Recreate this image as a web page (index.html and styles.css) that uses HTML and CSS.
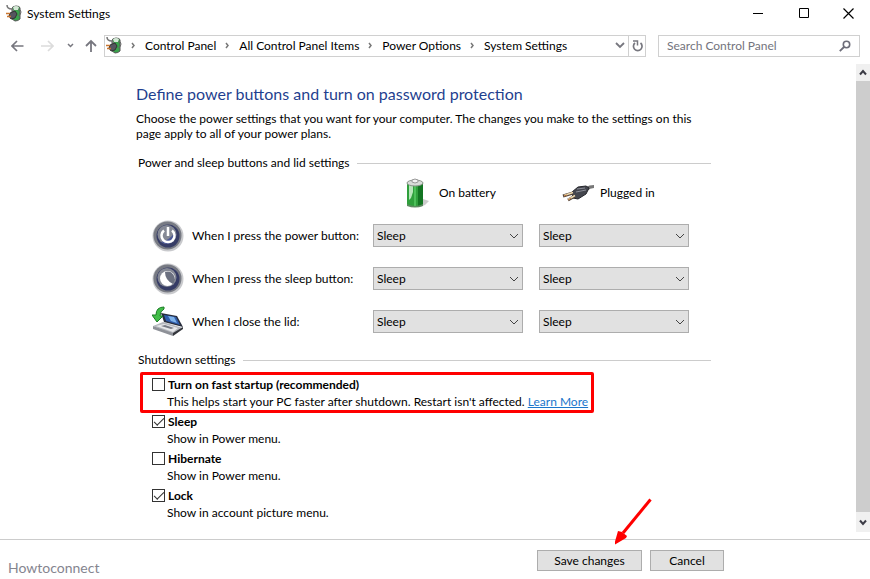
FILE: index.html
```html
<!DOCTYPE html>
<html lang="en">
<head>
  <meta charset="utf-8">
  <meta name="viewport" content="width=device-width, initial-scale=1.0">
  <title>System Settings</title>
  <link rel="stylesheet" href="styles.css">
</head>
<body>
  <!-- shared icons -->
  <svg class="defs" width="0" height="0" aria-hidden="true">
    <symbol id="app" viewBox="0 0 16 17">
      <path d="M6 4q0-3 4-3t4 2v11q-2 2-5 2l-3-2z" fill="#3aa34c" stroke="#555" />
      <path d="M7 2q3-2 6 0l-1 3H8z" fill="#d4e8d6" />
      <path d="M1 0q0 4 5 4l2 3" fill="none" stroke="#777" stroke-width="1.500" />
      <path d="M4 8l5-2 2 3-2 4-4 1-2-3z" fill="#55555f" stroke="#333" />
      <path d="M0 8.500h4M1 11.500h4" stroke="#c9762f" stroke-width="1.500" />
      <path d="M12 5q3-1 3 2t-3 4" fill="none" stroke="#666" />
    </symbol>
    <symbol id="chevron" viewBox="0 0 10 6">
      <path d="M1 1l4 4 4-4" fill="none" stroke="currentColor" />
    </symbol>
    <symbol id="sep" viewBox="0 0 5 7">
      <path d="M1 1l2 2.500-2 2.500" fill="none" stroke="#777" stroke-width="1.500" />
    </symbol>
  </svg>

  <div class="window">
    <header class="titlebar">
      <svg class="app-icon" width="16" height="17"><use href="#app" /></svg>
      <span class="title">System Settings</span>
      <button class="win-btn" aria-label="Minimize"><svg width="11" height="11"><path d="M0 5.500h10" stroke="#000" /></svg></button>
      <button class="win-btn" aria-label="Maximize"><svg width="11" height="11"><path d="M.5.5h9v9h-9z" fill="none" stroke="#000" /></svg></button>
      <button class="win-btn" aria-label="Close"><svg width="11" height="11"><path d="M.5.5l10 10M10.500.5l-10 10" stroke="#000" stroke-width="1.200" /></svg></button>
    </header>

    <nav class="navbar">
      <button class="nav-btn" aria-label="Back"><svg width="13" height="12" viewBox="0 0 13 12"><path d="M12.500 6H1.500M6 1L1 6l5 5" fill="none" stroke="#77777f" stroke-width="1.700" /></svg></button>
      <button class="nav-btn forward" aria-label="Forward"><svg width="13" height="12" viewBox="0 0 13 12"><path d="M0 6h11M7 1l5 5-5 5" fill="none" stroke="#dcdcdc" stroke-width="1.700" /></svg></button>
      <button class="nav-btn recent" aria-label="Recent locations"><svg width="7" height="5" viewBox="0 0 7 5"><path d="M1 1l2.500 2.500L6 1" fill="none" stroke="#77777f" stroke-width="1.500" /></svg></button>
      <button class="nav-btn up" aria-label="Up"><svg width="12" height="13" viewBox="0 0 12 13"><path d="M6 13V2M1 7l5-5 5 5" fill="none" stroke="#77777f" stroke-width="1.800" /></svg></button>
      <div class="address">
        <svg class="app-icon" width="16" height="17"><use href="#app" /></svg>
        <svg class="sep" width="5" height="7"><use href="#sep" /></svg>
        <a href="#">Control Panel</a>
        <svg class="sep" width="5" height="7"><use href="#sep" /></svg>
        <a href="#">All Control Panel Items</a>
        <svg class="sep" width="5" height="7"><use href="#sep" /></svg>
        <a href="#">Power Options</a>
        <svg class="sep" width="5" height="7"><use href="#sep" /></svg>
        <a href="#">System Settings</a>
        <button class="history" aria-label="Previous locations"><svg width="10" height="7" viewBox="0 0 10 7"><path d="M1 1l4 4 4-4" fill="none" stroke="#77777f" stroke-width="1.800" /></svg></button>
        <button class="refresh" aria-label="Refresh"><svg width="11" height="12" viewBox="0 0 11 12"><path d="M8.500 3A4.300 4.300 0 1 1 3 3" fill="none" stroke="#77777f" stroke-width="1.700" /><path d="M1 1h4.500v4.500" fill="none" stroke="#77777f" stroke-width="1.500" /></svg></button>
      </div>
      <div class="search">
        <input type="text" placeholder="Search Control Panel" aria-label="Search Control Panel">
        <svg width="12" height="12" viewBox="0 0 12 12"><circle cx="7.500" cy="4.500" r="3.200" fill="none" stroke="#6c6c78" stroke-width="1.600" /><path d="M5 7L.8 11.200" stroke="#6c6c78" stroke-width="1.800" /></svg>
      </div>
    </nav>

    <div class="body">
      <main class="content">
        <h1>Define power buttons and turn on password protection</h1>
        <p class="intro">Choose the power settings that you want for your computer. The changes you make to the settings on this page apply to all of your power plans.</p>

        <h2>Power and sleep buttons and lid settings</h2>
        <div class="power">
          <div class="source battery">
            <svg width="24" height="30" viewBox="0 0 24 30">
              <path d="M17 21l6 2-4 4-5 2z" fill="#ccc" />
              <path d="M1 5q8-4 16 0v22q-8 4-16 0z" fill="#2fa03c" />
              <path d="M12 5h5v22l-5 1z" fill="#137522" />
              <path d="M3 6h4v8l-2 6-2 2z" fill="#b9e6bb" />
              <path d="M8 6h2v22H8z" fill="#4dc05a" />
              <ellipse cx="9" cy="5" rx="8" ry="3" fill="#d8dcd8" stroke="#8b948b" />
              <path d="M6 2q3-2 6 0v2q-3 2-6 0z" fill="#f2f2f2" stroke="#999" />
              <path d="M1 26q8 4 16 0v2q-8 3-16 0z" fill="#5d8a60" />
            </svg>
            <span>On battery</span>
          </div>
          <div class="source plugged">
            <svg width="32" height="18" viewBox="0 0 32 18">
              <path d="M24 3q3-2 8-2v3q-4 0-7 3z" fill="#777" />
              <path d="M10 8l6-5 8-1 3 2-3 6-8 5-5-1z" fill="#44464e" stroke="#25262c" />
              <path d="M15 5l8-1M14 8l10-2" stroke="#8c8e98" />
              <path d="M11 9l-10 3M13 12l-7 4" stroke="#51433a" stroke-width="3" />
              <path d="M11 8.500l-9 3M13 11.500l-7 4" stroke="#ecd9b0" stroke-width="1.500" />
              <path d="M5 11l-3 1M9 14l-3 2" stroke="#b57338" />
            </svg>
            <span>Plugged in</span>
          </div>

          <div class="action">
            <svg width="32" height="32" viewBox="0 0 32 32">
              <circle cx="16" cy="16" r="15.500" fill="#c9cacd" />
              <circle cx="15.500" cy="15.500" r="14" fill="#777a83" />
              <circle cx="16" cy="16" r="11.500" fill="#363c66" />
              <circle cx="15" cy="14.500" r="9.500" fill="#858995" />
              <path d="M9 22a9 9 0 0 0 14-10q-5 8-14 10z" fill="#4c5896" />
              <path d="M12 10.500a6.500 6.500 0 1 0 8 0M16 7v9" fill="none" stroke="#fff" stroke-width="2.500" />
            </svg>
            <span>When I press the power button:</span>
          </div>
          <div class="combo"><select aria-label="Power button, on battery"><option>Sleep</option></select><svg width="10" height="6"><use href="#chevron" /></svg></div>
          <div class="combo"><select aria-label="Power button, plugged in"><option>Sleep</option></select><svg width="10" height="6"><use href="#chevron" /></svg></div>

          <div class="action">
            <svg width="32" height="32" viewBox="0 0 32 32">
              <circle cx="16" cy="16" r="15.500" fill="#c9cacd" />
              <circle cx="15.500" cy="15.500" r="14" fill="#777a83" />
              <circle cx="16" cy="16" r="11.500" fill="#363c66" />
              <circle cx="15" cy="14.500" r="9.500" fill="#858995" />
              <circle cx="15.500" cy="15.500" r="7.500" fill="#fff" />
              <path d="M13 9a7.500 7.500 0 0 1 8 12q-8-4-8-12z" fill="#6b7080" />
            </svg>
            <span>When I press the sleep button:</span>
          </div>
          <div class="combo"><select aria-label="Sleep button, on battery"><option>Sleep</option></select><svg width="10" height="6"><use href="#chevron" /></svg></div>
          <div class="combo"><select aria-label="Sleep button, plugged in"><option>Sleep</option></select><svg width="10" height="6"><use href="#chevron" /></svg></div>

          <div class="action">
            <svg width="32" height="32" viewBox="0 0 32 32">
              <path d="M1 20l10-4 20 6-10 6z" fill="#b4b7bd" />
              <path d="M1 20l20 7v3L1 23z" fill="#8e9198" />
              <path d="M21 27l10-6v2l-10 7z" fill="#33353b" />
              <path d="M4 20l8-2 14 4-5 4z" fill="#e7e8eb" />
              <path d="M9 20l4-1 9 3-3 1z" fill="#777b85" />
              <path d="M9 7l16 3 6 11-19-5z" fill="#282d3c" />
              <path d="M12 9l12 2 4 8-14-4z" fill="#315fae" />
              <path d="M16 10l6 1 3 6-6-2z" fill="#7fb3ea" />
              <path d="M12 1Q4 1 4 9H0l5 7 6-6H8q0-5 4-7z" fill="#42bd48" stroke="#1a7c24" />
            </svg>
            <span>When I close the lid:</span>
          </div>
          <div class="combo"><select aria-label="Closing the lid, on battery"><option>Sleep</option></select><svg width="10" height="6"><use href="#chevron" /></svg></div>
          <div class="combo"><select aria-label="Closing the lid, plugged in"><option>Sleep</option></select><svg width="10" height="6"><use href="#chevron" /></svg></div>
        </div>

        <h2>Shutdown settings</h2>
        <div class="shutdown">
          <div class="option highlight">
            <input type="checkbox" id="fast">
            <label for="fast">Turn on fast startup (recommended)</label>
            <p>This helps start your PC faster after shutdown. Restart isn't affected. <a href="#">Learn More</a></p>
          </div>
          <div class="option">
            <input type="checkbox" id="sleep" checked>
            <label for="sleep">Sleep</label>
            <p>Show in Power menu.</p>
          </div>
          <div class="option">
            <input type="checkbox" id="hibernate">
            <label for="hibernate">Hibernate</label>
            <p>Show in Power menu.</p>
          </div>
          <div class="option">
            <input type="checkbox" id="lock" checked>
            <label for="lock">Lock</label>
            <p>Show in account picture menu.</p>
          </div>
        </div>
      </main>
      <div class="scrollbar">
        <button aria-label="Scroll up"><svg width="8" height="7" viewBox="0 0 8 7"><path d="M1 5.500l3-3.500 3 3.500" fill="none" stroke="#3c3c46" stroke-width="2" /></svg></button>
        <div class="thumb"></div>
        <button aria-label="Scroll down"><svg width="8" height="7" viewBox="0 0 8 7"><path d="M1 1.500L4 5l3-3.500" fill="none" stroke="#3c3c46" stroke-width="2" /></svg></button>
      </div>
    </div>

    <footer class="footer">
      <span class="watermark">Howtoconnect</span>
      <div class="save-wrap">
        <button class="btn save">Save changes</button>
        <svg class="arrow" width="38" height="48" viewBox="0 0 38 48">
          <path d="M35.500 1.500L8 35" stroke="#f00" stroke-width="3" />
          <path d="M-1 47l4-14 4 1 5 4-1 2z" fill="#f00" />
        </svg>
      </div>
      <button class="btn cancel">Cancel</button>
    </footer>
  </div>
</body>
</html>
```

FILE: styles.css
```css
* {
  box-sizing: border-box;
}
body {
  margin: 0;
  background: #fff;
  color: #000;
  font: 12px/15px Lato, "Open Sans", sans-serif;
}
button, input, select {
  font: inherit;
  color: inherit;
}
button {
  padding: 0;
  border: 0;
  background: none;
}
svg {
  display: block;
  flex: none;
}
h1, h2, p {
  margin: 0;
  font-weight: normal;
}
.defs {
  position: absolute;
}
.window {
  display: flex;
  flex-direction: column;
  min-height: 100vh;
}

/* title bar */
.titlebar {
  display: flex;
  align-items: center;
  height: 27px;
  padding-left: 6px;
}
.title {
  flex: 1;
  margin-left: 5px;
}
.win-btn {
  display: flex;
  align-items: center;
  justify-content: center;
  width: 46px;
  height: 27px;
}
.win-btn:last-child {
  width: 43px;
}

/* navigation */
.navbar {
  display: flex;
  align-items: center;
  height: 37px;
  padding: 0 10px 0 11px;
}
.nav-btn {
  display: flex;
}
.forward {
  margin-left: 17px;
}
.recent {
  margin-left: 13px;
}
.up {
  margin-left: 11px;
}
.address {
  display: flex;
  flex: 1;
  align-items: center;
  height: 22px;
  margin-left: 7px;
  padding-left: 1px;
  border: 1px solid #d0d0d0;
}
.address a {
  color: #000;
  text-decoration: none;
  white-space: nowrap;
}
.sep {
  margin: 0 9px;
}
.history {
  margin-left: auto;
  padding-right: 3px;
}
.refresh {
  display: flex;
  align-items: center;
  justify-content: center;
  width: 17px;
  height: 20px;
  border-left: 1px solid #d0d0d0;
}
.search {
  display: flex;
  align-items: center;
  width: 202px;
  height: 22px;
  margin-left: 12px;
  padding: 0 8px;
  border: 1px solid #d0d0d0;
}
.search input {
  flex: 1;
  min-width: 0;
  padding: 0;
  border: 0;
  outline: 0;
}
.search input::placeholder {
  color: #73737d;
}

/* page */
.body {
  display: flex;
  flex: 1;
}
.content {
  flex: 1;
  padding: 20px 145px 12px 136px;
}
h1 {
  color: #1f3f8f;
  font-size: 16px;
  line-height: 20px;
}
.intro {
  margin-top: 7px;
}
h2 {
  display: flex;
  align-items: center;
  margin: 14px 0 0 2px;
  font-size: 12px;
  line-height: 16px;
}
h2::after {
  content: "";
  flex: 1;
  height: 1px;
  margin-left: 7px;
  background: #ccc;
}
.power {
  display: grid;
  grid-template-columns: 205px 150px 150px;
  grid-auto-rows: 43px;
  column-gap: 16px;
  align-items: center;
  margin-left: 16px;
}
.power + h2 {
  margin-top: 9px;
}
.source {
  display: flex;
  align-items: center;
}
.battery {
  grid-column: 2;
  gap: 9px;
  padding-left: 33px;
}
.plugged {
  gap: 6px;
  padding-left: 23px;
}
.action {
  display: flex;
  align-items: center;
  gap: 8px;
  white-space: nowrap;
}
.combo {
  position: relative;
}
.combo select {
  display: block;
  width: 100%;
  height: 23px;
  padding: 0 3px;
  appearance: none;
  border: 1px solid #adadad;
  border-radius: 0;
  background: #e1e1e1;
}
.combo svg {
  position: absolute;
  top: 9px;
  right: 4px;
  color: #444;
  pointer-events: none;
}

/* shutdown options */
.shutdown {
  margin-top: 4px;
}
.option {
  display: grid;
  grid-template-columns: 13px 1fr;
  column-gap: 3px;
  align-items: center;
  padding-left: 16px;
  line-height: 17px;
  margin-bottom: 3px;
}
.option label {
  font-weight: bold;
}
.option p {
  grid-column: 2;
  margin-left: -1px;
  white-space: nowrap;
}
.option a {
  color: #1a76cc;
}
.option input {
  display: grid;
  place-items: center;
  width: 13px;
  height: 13px;
  margin: 0;
  appearance: none;
  border: 1px solid #333;
  background: #fff;
}
.option input:checked::after {
  content: "";
  width: 9px;
  height: 4px;
  margin-top: -2px;
  border: solid #333;
  border-width: 0 0 1px 1px;
  transform: rotate(-45deg);
}
.highlight {
  width: max-content;
  margin: 0 0 0 4px;
  padding: 1px 3px 0 9px;
  border: 3px solid #f00;
  border-radius: 2px;
}

/* scroll bar */
.scrollbar {
  display: flex;
  flex-direction: column;
  width: 14px;
  margin-bottom: 7px;
  background: #f0f0f0;
}
.scrollbar button {
  display: flex;
  align-items: center;
  justify-content: center;
  height: 17px;
}
.scrollbar button:last-child {
  height: 20px;
}
.thumb {
  flex: 1;
  background: #cdcdcd;
}

/* footer */
.footer {
  display: flex;
  align-items: center;
  gap: 8px;
  height: 40px;
  padding: 2px 146px 0 8px;
  border-top: 1px solid #ccc;
}
.watermark {
  flex: 1;
  margin-top: 14px;
  color: #85858f;
  font-size: 14px;
}
.save-wrap {
  position: relative;
}
.btn {
  height: 21px;
  border: 1px solid #adadad;
  background: #e1e1e1;
}
.save {
  width: 105px;
}
.cancel {
  width: 74px;
}
.arrow {
  position: absolute;
  left: 78px;
  bottom: 25px;
}
```
